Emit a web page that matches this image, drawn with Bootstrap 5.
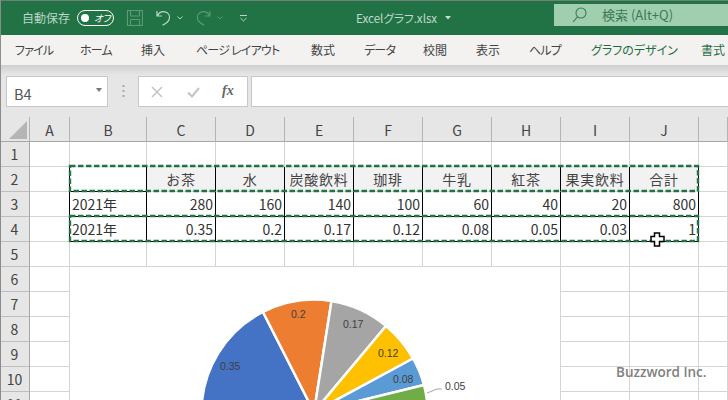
<!DOCTYPE html>
<html lang="ja">
<head>
<meta charset="utf-8">
<title>Excelグラフ.xlsx</title>
<link href="https://cdn.jsdelivr.net/npm/bootstrap@5.3.0/dist/css/bootstrap.min.css" rel="stylesheet">
<style>
html,body{margin:0;width:728px;height:400px;overflow:hidden;background:#fff}
body{font-family:"Noto Sans CJK JP","Liberation Sans",sans-serif;font-feature-settings:"palt";position:relative}
.win-edge{position:absolute;left:0;top:0;width:1px;height:400px;background:#8c8c8c;z-index:5}
.titlebar{height:35px;background:#217346;border-top:1px solid #6f8177;color:#cfe3d6;font-size:12px;white-space:nowrap}
.t-auto{margin-left:22px;width:55px;color:#b9d6c5;font-size:12px}
.t-toggle{width:38px;height:16px;border:1.5px solid #fff;border-radius:8px;color:#fff;font-size:9.5px;font-style:italic;padding:0 3px}
.t-dot{width:8px;height:8px;background:#fff;border-radius:50%}
.t-save{margin-left:13px}
.t-undo{margin-left:13px}
.t-chev1{margin-left:6px}
.t-redo{margin-left:13px}
.t-chev2{margin-left:6px}
.t-qat{margin-left:17px}
.t-name{margin-left:109px;width:81px;color:#c0d9ca;letter-spacing:-.05px;font-size:11.7px}
.t-caret{margin-left:8px}
.t-search{margin-left:103px;width:175px;height:22px;margin-top:-6px;background:#9fcfae;color:#3a7a55;padding-left:18px}
.t-search-text{margin-left:15px;font-size:13px}
.tabs{height:30px;background:#f3f2f1;font-size:12px;color:#444;padding-left:15px;white-space:nowrap}
.tab-on{color:#1f6e43}
.kana{letter-spacing:-.8px}
.tb1{width:65px}.tb2{width:61px}.tb3{width:55px}.tb4{width:115px}.tb5{width:53px}.tb6{width:59px}.tb7{width:53px}.tb8{width:53px}.tb9{width:62px}.tb10{width:110px}
.fbar{height:52px;padding-top:11px;background:linear-gradient(#cfcfcf 0,#e6e6e6 10px)}
.namebox{margin-left:6px;width:102px;height:31px;background:#fff;border:1px solid #c8c8c8;color:#555;font-size:14.500px;padding:0 5px 0 7px}
.nb-label{padding-top:4px}
.nb-caret{width:0;height:0;border-left:3.5px solid transparent;border-right:3.5px solid transparent;border-top:4px solid #777;margin-top:-3px}
.fdots{width:30px;color:#a0a0a0}
.fxbox{width:110px;height:31px;background:#fff;border:1px solid #c8c8c8}
.fx-x{margin-left:12px}
.fxglyph{font-family:"Liberation Serif",serif;font-style:italic;font-weight:700;font-size:14px;color:#666;margin-left:22px;margin-top:-2px}
.finput{margin-left:3px;flex:1;height:31px;background:#fff;border:1px solid #c8c8c8;border-right:0}
.sheetwrap{position:relative;height:283px;overflow:hidden}
.sheet{border-collapse:separate;border-spacing:0;table-layout:fixed;width:728px;font-size:14px;color:#333;line-height:1;font-feature-settings:normal}
.sheet td,.sheet th{height:25px;padding:0 1px;border-right:1px solid #d4d4d4;border-bottom:1px solid #d4d4d4;font-weight:400;overflow:hidden;white-space:nowrap;vertical-align:middle}
.sheet thead th{background:#e6e6e6;text-align:center;border-right-color:#b4b4b4;border-bottom-color:#a6a6a6;color:#444;padding-top:1px}
.sheet tbody th{background:#e6e6e6;text-align:center;border-right-color:#a6a6a6;border-bottom-color:#bdbdbd;color:#444}
.sheet td.hd{background:#f2f2f2;text-align:center;color:#444;border-right-color:#000;letter-spacing:.7px}
.sheet td.bx{border-right-color:#000;border-bottom-color:#000;text-align:right;padding-right:2px}
.sheet td.lf{text-align:left;padding-left:2px}
.sheet td.lm{border-right-color:#000}
.corner{display:block;margin:0 0 0 8px}
.ants{position:absolute;left:0;top:0;pointer-events:none}
.chartbox{position:absolute;left:70px;top:150px;width:490px;height:133px;background:#fff}
.pie-lbl{font-family:"Liberation Sans",sans-serif;font-size:10.5px;fill:#404040}
.cursor-x{position:absolute;left:650px;top:115px}
.wmark{position:absolute;left:616px;top:363px;font-family:"Open Sans",sans-serif;font-weight:600;font-size:13.5px;line-height:18px;color:#808080;z-index:4}
</style>
</head>
<body>
<div class="win-edge"></div>

<div class="titlebar d-flex align-items-center">
  <span class="t-auto">自動保存</span>
  <span class="t-toggle d-flex align-items-center justify-content-between"><span class="t-dot"></span><span>オフ</span></span>
  <svg class="t-save" width="16" height="16" viewBox="0 0 16 16" fill="none" stroke="#5f9e79" stroke-width="1"><rect x=".5" y=".5" width="15" height="15"/><path d="M3.5 1v5h9V1M3.5 15V9.5h9V15"/></svg>
  <svg class="t-undo" width="15" height="16" viewBox="0 0 15 16" fill="none" stroke="#bcd8c7" stroke-width="1.2"><path d="M1 1v5h5M1.3 5.8C3 2.6 6 1.2 9 1.8c3.400.8 5 3.800 4.500 6.500-.5 2.900-2.800 5-7 7"/></svg>
  <svg class="t-chev1" width="6" height="4" viewBox="0 0 6 4" fill="none" stroke="#bcd8c7"><path d="M.5.5 3 3 5.500.5"/></svg>
  <svg class="t-redo" width="15" height="16" viewBox="0 0 15 16" fill="none" stroke="#5a9a75" stroke-width="1.2"><path d="M14 1v5H9M13.700 5.800C12 2.600 9 1.200 6 1.800 2.600 2.600 1 5.600 1.500 8.300c.5 2.900 2.800 5 7 7"/></svg>
  <svg class="t-chev2" width="6" height="4" viewBox="0 0 6 4" fill="none" stroke="#5a9a75"><path d="M.5.5 3 3 5.500.5"/></svg>
  <svg class="t-qat" width="7" height="7" viewBox="0 0 7 7" fill="none" stroke="#bcd8c7"><path d="M0 .5h7M.5 3 3.500 6 6.500 3"/></svg>
  <span class="t-name">Excelグラフ.xlsx</span>
  <svg class="t-caret" width="6" height="4" viewBox="0 0 6 4"><path d="M0 0h6L3 3.500z" fill="#c8ded0"/></svg>
  <div class="t-search d-flex align-items-center">
    <svg width="15" height="16" viewBox="0 0 15 16" fill="none" stroke="#3a7a55" stroke-width="1.1"><circle cx="9" cy="6" r="5"/><path d="M5.500 9.800 1 15"/></svg>
    <span class="t-search-text">検索 (Alt+Q)</span>
  </div>
</div>

<div class="tabs d-flex align-items-center">
  <span class="tb1 kana">ファイル</span><span class="tb2 kana">ホーム</span><span class="tb3">挿入</span><span class="tb4 kana">ページ レイアウト</span><span class="tb5">数式</span><span class="tb6 kana">データ</span><span class="tb7">校閲</span><span class="tb8">表示</span><span class="tb9 kana">ヘルプ</span><span class="tb10 tab-on">グラフのデザイン</span><span class="tab-on">書式</span>
</div>

<div class="fbar d-flex align-items-start">
  <div class="namebox d-flex align-items-center justify-content-between"><span class="nb-label">B4</span><span class="nb-caret"></span></div>
  <div class="fdots d-flex justify-content-center"><svg width="3" height="31" viewBox="0 0 3 31"><path d="M.5 9h2v2h-2zM.5 14h2v2h-2zM.5 19h2v2h-2z" fill="#a8a8a8"/></svg></div>
  <div class="fxbox d-flex align-items-center">
    <svg class="fx-x" width="12" height="12" viewBox="0 0 12 12" fill="none" stroke="#c4c4c4" stroke-width="1.500"><path d="M1 1l10 10M11 1 1 11"/></svg>
    <svg class="ms-4" width="13" height="12" viewBox="0 0 13 12" fill="none" stroke="#c4c4c4" stroke-width="2"><path d="M1 6.500l4 4L12 2"/></svg>
    <span class="fxglyph">fx</span>
  </div>
  <div class="finput"></div>
</div>

<div class="sheetwrap">
<table class="sheet">
<colgroup><col style="width:30px"><col style="width:40px"><col style="width:77px"><col style="width:69px"><col style="width:69px"><col style="width:69px"><col style="width:69px"><col style="width:69px"><col style="width:69px"><col style="width:69px"><col style="width:69px"><col></colgroup>
<thead><tr>
<th><svg class="corner" width="18" height="18" viewBox="0 0 18 18"><path d="M18 0v18H0z" fill="#b5b5b5"/></svg></th><th>A</th><th>B</th><th>C</th><th>D</th><th>E</th><th>F</th><th>G</th><th>H</th><th>I</th><th>J</th><th></th>
</tr></thead>
<tbody>
<tr><th>1</th><td></td><td></td><td></td><td></td><td></td><td></td><td></td><td></td><td></td><td></td><td></td></tr>
<tr><th>2</th><td class="lm"></td><td class="bx"></td><td class="hd">お茶</td><td class="hd">水</td><td class="hd">炭酸飲料</td><td class="hd">珈琲</td><td class="hd">牛乳</td><td class="hd">紅茶</td><td class="hd">果実飲料</td><td class="hd">合計</td><td></td></tr>
<tr><th>3</th><td class="lm"></td><td class="bx lf">2021年</td><td class="bx">280</td><td class="bx">160</td><td class="bx">140</td><td class="bx">100</td><td class="bx">60</td><td class="bx">40</td><td class="bx">20</td><td class="bx">800</td><td></td></tr>
<tr><th>4</th><td class="lm"></td><td class="bx lf">2021年</td><td class="bx">0.35</td><td class="bx">0.2</td><td class="bx">0.17</td><td class="bx">0.12</td><td class="bx">0.08</td><td class="bx">0.05</td><td class="bx">0.03</td><td class="bx">1</td><td></td></tr>
<tr><th>5</th><td></td><td></td><td></td><td></td><td></td><td></td><td></td><td></td><td></td><td></td><td></td></tr>
<tr><th>6</th><td></td><td></td><td></td><td></td><td></td><td></td><td></td><td></td><td></td><td></td><td></td></tr>
<tr><th>7</th><td></td><td></td><td></td><td></td><td></td><td></td><td></td><td></td><td></td><td></td><td></td></tr>
<tr><th>8</th><td></td><td></td><td></td><td></td><td></td><td></td><td></td><td></td><td></td><td></td><td></td></tr>
<tr><th>9</th><td></td><td></td><td></td><td></td><td></td><td></td><td></td><td></td><td></td><td></td><td></td></tr>
<tr><th>10</th><td></td><td></td><td></td><td></td><td></td><td></td><td></td><td></td><td></td><td></td><td></td></tr>
<tr><th>11</th><td></td><td></td><td></td><td></td><td></td><td></td><td></td><td></td><td></td><td></td><td></td></tr>
</tbody>
</table>

<div class="chartbox">
  <svg width="490" height="133" viewBox="70 267 490 133">
    <g stroke="#fff" stroke-width="2.500" stroke-linejoin="round">
      <path d="M314 412L201.500 412A112.500 112.500 0 0 1 263 312A112.500 112.500 0 0 1 263 312z" fill="#4472c4"/>
      <path d="M314 412L263 312A112.500 112.500 0 0 1 331.500 301z" fill="#ed7d31"/>
      <path d="M314 412L331.500 301A112.500 112.500 0 0 1 386 326z" fill="#a5a5a5"/>
      <path d="M314 412L386 326A112.500 112.500 0 0 1 413 358.500z" fill="#ffc000"/>
      <path d="M314 412L413 358.500A113.500 113.500 0 0 1 424 385z" fill="#5b9bd5"/>
      <path d="M314 412L424 385A114 114 0 0 1 427 401.500z" fill="#70ad47"/>
    </g>
    <path d="M427 393l10-4h5" fill="none" stroke="#a6a6a6"/>
    <text class="pie-lbl" x="220" y="370">0.35</text>
    <text class="pie-lbl" x="291" y="318">0.2</text>
    <text class="pie-lbl" x="343" y="328">0.17</text>
    <text class="pie-lbl" x="378" y="357">0.12</text>
    <text class="pie-lbl" x="393" y="383">0.08</text>
    <text class="pie-lbl" x="445" y="390">0.05</text>
  </svg>
</div>

<svg class="ants" width="728" height="283" fill="none" stroke="#217346" stroke-width="2.400" stroke-dasharray="5.500 2.500">
  <rect x="70" y="49" width="628" height="25"/>
  <rect x="70" y="99" width="628" height="25"/>
</svg>

<svg class="cursor-x" width="15" height="15" viewBox="0 0 15 15"><path d="M4.500 1h5v3.500H14v5H9.500V14h-5V9.500H1v-5h3.500z" fill="#fff" stroke="#000" stroke-width="1.500"/></svg>
</div>

<div class="wmark">Buzzword Inc.</div>
</body>
</html>
